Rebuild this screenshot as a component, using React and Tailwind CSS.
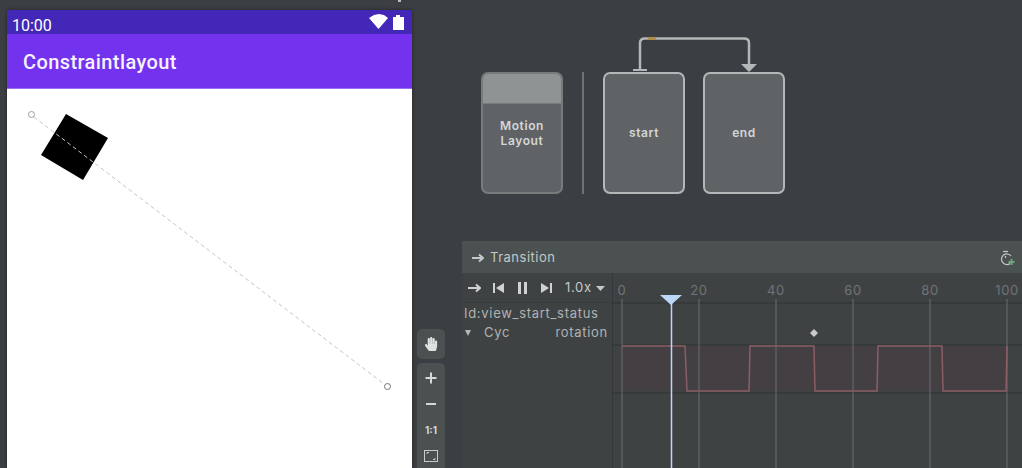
import React from 'react';
import { FaHandPaper } from 'react-icons/fa';

const ticks = [
  { label: '0', x: 10 },
  { label: '20', x: 87 },
  { label: '40', x: 164 },
  { label: '60', x: 241 },
  { label: '80', x: 318 },
  { label: '100', x: 395 },
];

const WAVE = 'M10 73H73L75 118H137L138 73H202L203 118H265L266 73H330L331 118H394L395 73';

const StateCard = ({ label }) => (
  <div className="w-[82px] h-[122px] rounded-[7px] border-2 border-[#b4b7b7] bg-[#5f6366] flex items-center justify-center">
    <span className="text-[12px] font-semibold tracking-[0.6px] text-[#d5d6d6]">{label}</span>
  </div>
);

const PhoneBody = () => (
  <div className="relative flex-1 bg-white">
    <svg className="absolute inset-0" width="405" height="379">
      <polygon points="59,25 101,49 76,91 34,66" fill="#000" />
      <line x1="27" y1="28" x2="377" y2="295" stroke="#cbc6b8" strokeWidth="1" strokeDasharray="4 3" />
      <circle cx="24.5" cy="25.5" r="3" fill="#fff" stroke="#a09c98" strokeWidth="1" />
      <circle cx="380.5" cy="297.5" r="3" fill="#fff" stroke="#77736f" strokeWidth="1" />
    </svg>
  </div>
);

const Phone = () => (
  <div className="w-[405px] h-[458px] mt-[10px] ml-[7px] flex flex-col shrink-0 shadow-[0_0_3px_#222]">
    <div className="h-[24px] bg-[#4327b6] flex items-center justify-between pl-[5px] pr-[8px] text-white">
      <span className="text-[16px] leading-none mt-[8px] font-['Roboto',sans-serif]">10:00</span>
      <svg width="35" height="16" viewBox="0 0 35 16" className="-mt-[1px]">
        <polygon points="0,4 5,1 10,0 15,1 19,4 9.5,15" fill="#fff" />
        <path d="M24 3H27V1H31V3H35V16H24Z" fill="#fff" />
      </svg>
    </div>
    <div className="h-[55px] bg-[#7333ee] border-b border-[#9a6cf2] flex items-center pl-[16px] pt-[2px]">
      <span className="text-[20px] font-medium tracking-[0.4px] text-[#f6f1fe] font-['Roboto',sans-serif]">Constraintlayout</span>
    </div>
    <PhoneBody />
  </div>
);

const Tools = () => (
  <div className="w-[50px] shrink-0 pl-[5px] pt-[329px] flex flex-col gap-[4px]">
    <div className="w-[28px] h-[30px] rounded-[5px] bg-[#4b5150] flex items-center justify-center">
      <FaHandPaper className="text-[#e0e1e1]" size={14} />
    </div>
    <div className="w-[28px] flex-1 rounded-t-[5px] bg-[#4b5150] flex flex-col items-center pt-[7px] gap-[10px]">
      <svg width="12" height="16" viewBox="0 0 12 16">
        <path d="M6 2.5V13.5M0.5 8H11.5" stroke="#d6d7d7" strokeWidth="2" />
      </svg>
      <svg width="12" height="16" viewBox="0 0 12 16">
        <path d="M1 8H11" stroke="#d6d7d7" strokeWidth="2" />
      </svg>
      <span className="h-[16px] text-[10px] leading-[16px] font-bold text-[#d6d7d7]">1:1</span>
      <svg width="14" height="14" viewBox="0 0 14 14" className="mt-[1px]">
        <rect x="0.5" y="1.5" width="13" height="11" fill="none" stroke="#c9caca" />
        <path d="M3 5V3.5H5M11 9V10.5H9" fill="none" stroke="#c9caca" />
      </svg>
    </div>
  </div>
);

const Overview = () => (
  <div className="relative h-[241px] pt-[72px] pl-[19px] flex">
    <div className="w-[82px] h-[122px] rounded-[7px] border-2 border-[#777b7c] bg-[#5f6366] overflow-hidden flex flex-col">
      <div className="h-[30px] bg-[#8f9394] border-b border-[#777b7c]" />
      <div className="pt-[14px] text-center text-[12px] leading-[15px] font-semibold tracking-[0.6px] text-[#d5d6d6]">
        Motion
        <br />
        Layout
      </div>
    </div>
    <div className="w-[2px] h-[122px] ml-[19px] mr-[19px] bg-[#6f7374]" />
    <div className="flex gap-[18px]">
      <StateCard label="start" />
      <StateCard label="end" />
    </div>
    <svg className="absolute left-[165px] top-[30px]" width="135" height="45">
      <path d="M13 40V13Q13 8.500 18 8.500H117Q122 8.500 122 13V35" fill="none" stroke="#b4b7b7" strokeWidth="2.500" />
      <path d="M6 40H20" stroke="#b4b7b7" strokeWidth="2" />
      <path d="M114 34H130L122 42Z" fill="#b4b7b7" />
      <path d="M21 8.500H29" stroke="#b08d45" strokeWidth="2.500" />
    </svg>
  </div>
);

const Timeline = () => (
  <svg width="410" height="195" className="block shrink-0">
    <line x1="0.500" y1="0" x2="0.500" y2="195" stroke="#35383a" strokeWidth="1" />
    <rect x="10" y="73" width="385" height="45" fill="#433f42" />
    <path d="M0 30H410M0 72H410M0 120H410" stroke="#303335" strokeWidth="1" />
    {ticks.map((t) => (
      <g key={t.label}>
        <text x={t.x} y="22" textAnchor="middle" fontSize="13" letterSpacing="0.6" fill="#6f7476" fontFamily="Inter, sans-serif">
          {t.label}
        </text>
        <line x1={t.x} y1="26" x2={t.x} y2="195" stroke="#6a6e72" strokeWidth="1" />
      </g>
    ))}
    <path d={WAVE} fill="none" stroke="#8b5e66" strokeWidth="1.500" />
    <polygon points="198,60 202,56 206,60 202,64" fill="#c9caca" />
    <line x1="59.500" y1="28" x2="59.500" y2="195" stroke="#bcd8f8" strokeWidth="1.500" />
    <polygon points="48,22 70,22 59,32" fill="#bcd8f8" />
  </svg>
);

const Panel = () => (
  <div className="flex-1 flex flex-col bg-[#3f4243]">
    <div className="h-[32px] bg-[#4b5150] flex items-center justify-between pl-[10px] pr-[7px] pt-[1px] text-[#c5c8c8]">
      <div className="flex items-center gap-[6px]">
        <svg width="12" height="10" viewBox="0 0 12 10">
          <path d="M0 5H10M7 1.500L11 5L7 8.500" fill="none" stroke="#c5c8c8" strokeWidth="2" />
        </svg>
        <span className="text-[13px] tracking-[0.5px]">Transition</span>
      </div>
      <svg width="16" height="16" viewBox="0 0 16 16">
        <path d="M4 1.500H9" stroke="#c5c8c8" strokeWidth="1.200" />
        <path d="M11 13.500A5.300 5.300 0 1 1 12 6" fill="none" stroke="#c5c8c8" strokeWidth="1.200" />
        <path d="M6.500 6V8" stroke="#c5c8c8" strokeWidth="1.200" />
        <path d="M12.500 9V15M9.500 12H15.500" stroke="#6fa57d" strokeWidth="2" />
      </svg>
    </div>
    <div className="flex flex-1">
      <div className="w-[150px] shrink-0 text-[#aeb2b3] text-[13px] tracking-[0.7px]">
        <div className="h-[30px] flex items-center pl-[6px] pt-[1px] text-[#c5c8c8] border-b border-[#393c3e]">
          <svg width="13" height="10" viewBox="0 0 13 10">
            <path d="M0 5H11M8 1.500L12 5L8 8.500" fill="none" stroke="#d0d2d2" strokeWidth="2" />
          </svg>
          <svg width="11" height="10" viewBox="0 0 11 10" className="ml-[12px]">
            <path d="M1 0V10" stroke="#d0d2d2" strokeWidth="2" />
            <path d="M11 0V10L3 5Z" fill="#d0d2d2" />
          </svg>
          <svg width="11" height="12" viewBox="0 0 11 12" className="ml-[13px]">
            <path d="M1 0H4V12H1ZM7 0H10V12H7Z" fill="#d0d2d2" />
          </svg>
          <svg width="11" height="10" viewBox="0 0 11 10" className="ml-[13px]">
            <path d="M0 0V10L8 5Z" fill="#d0d2d2" />
            <path d="M10 0V10" stroke="#d0d2d2" strokeWidth="2" />
          </svg>
          <span className="ml-[13px]">1.0x</span>
          <svg width="9" height="5" viewBox="0 0 9 5" className="ml-[4px]">
            <path d="M0 0H9L4.500 5Z" fill="#c5c8c8" />
          </svg>
        </div>
        <div className="h-[19px] leading-[19px] pl-[2px] pt-[1px]">Id:view_start_status</div>
        <div className="h-[19px] flex items-center pl-[3px] pr-[4px] pt-[2px]">
          <svg width="6" height="6" viewBox="0 0 6 6">
            <path d="M0 0H6L3 6Z" fill="#b4b8b9" />
          </svg>
          <span className="ml-[13px]">Cyc</span>
          <span className="ml-auto">rotation</span>
        </div>
      </div>
      <Timeline />
    </div>
  </div>
);

export default function App() {
  return (
    <div className="relative flex w-[1022px] h-[468px] overflow-hidden bg-[#3b3e42] font-['Inter',sans-serif]">
      <div className="absolute left-[398px] top-0 w-[3px] h-[2px] bg-[#b9bbbc]" />
      <Phone />
      <Tools />
      <div className="flex-1 flex flex-col">
        <Overview />
        <Panel />
      </div>
    </div>
  );
}
